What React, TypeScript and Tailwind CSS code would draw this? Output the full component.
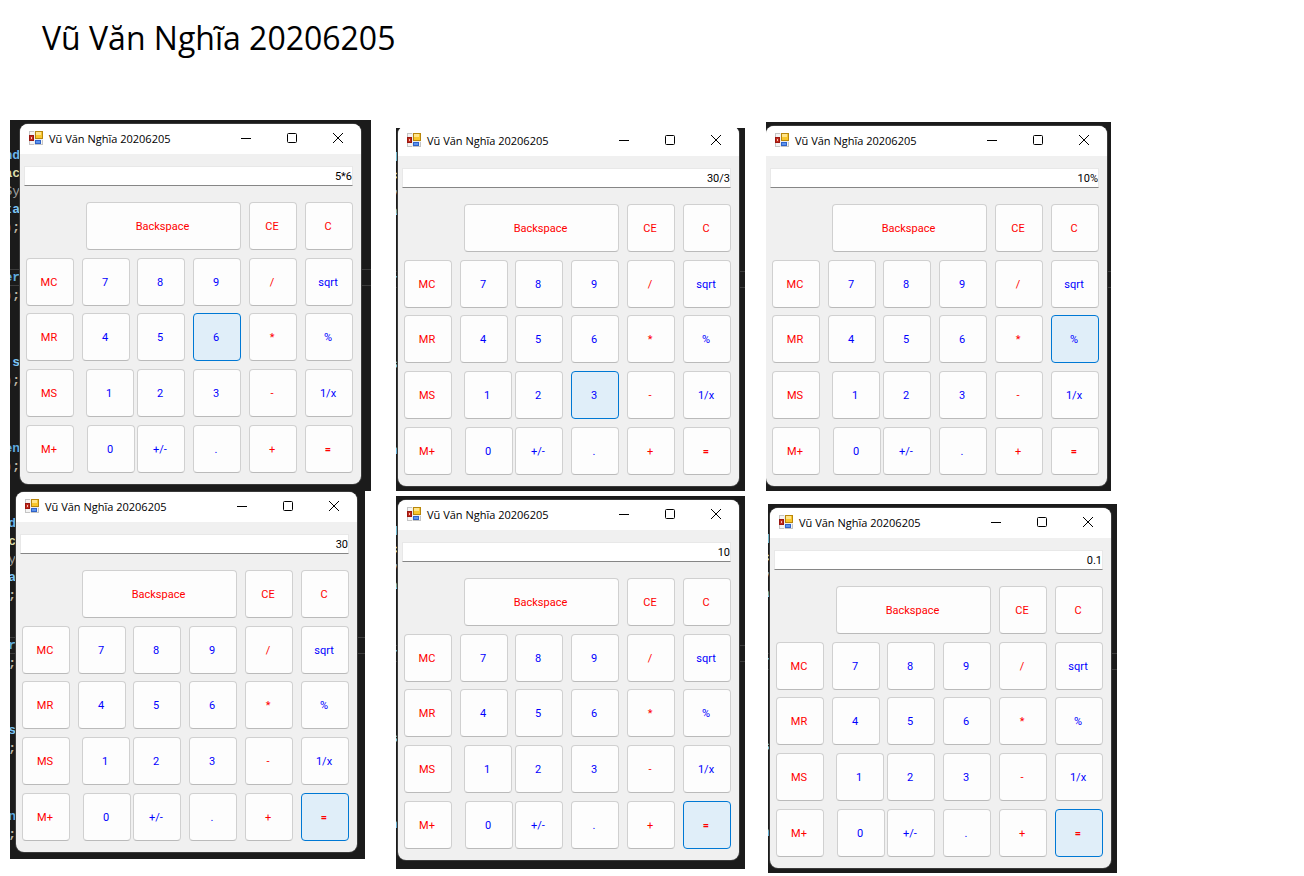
import React from "react";

type Key = { label: string; size?: string; space: string; blue?: boolean; bold?: boolean };
type Row = { space: string; keys: Key[] };

const rows: Row[] = [
  {
    space: "mt-4",
    keys: [
      { label: "Backspace", size: "w-[155px]", space: "ml-[60px]" },
      { label: "CE", space: "ml-2" },
      { label: "C", space: "ml-2" },
    ],
  },
  {
    space: "mt-2",
    keys: [
      { label: "MC", space: "" },
      { label: "7", space: "ml-2", blue: true },
      { label: "8", space: "ml-[7px]", blue: true },
      { label: "9", space: "ml-2", blue: true },
      { label: "/", space: "ml-2" },
      { label: "sqrt", space: "ml-2", blue: true },
    ],
  },
  {
    space: "mt-[7px]",
    keys: [
      { label: "MR", space: "" },
      { label: "4", space: "ml-2", blue: true },
      { label: "5", space: "ml-[7px]", blue: true },
      { label: "6", space: "ml-2", blue: true },
      { label: "*", space: "ml-2" },
      { label: "%", space: "ml-2", blue: true },
    ],
  },
  {
    space: "mt-2",
    keys: [
      { label: "MS", space: "" },
      { label: "1", space: "ml-3", blue: true },
      { label: "2", space: "ml-[3px]", blue: true },
      { label: "3", space: "ml-2", blue: true },
      { label: "-", space: "ml-2" },
      { label: "1/x", space: "ml-2", blue: true },
    ],
  },
  {
    space: "mt-2",
    keys: [
      { label: "M+", space: "" },
      { label: "0", space: "ml-[13px]", blue: true },
      { label: "+/-", space: "ml-0.5", blue: true },
      { label: ".", space: "ml-2", blue: true },
      { label: "+", space: "ml-2" },
      { label: "=", space: "ml-2", bold: true },
    ],
  },
];

function FormIcon() {
  return (
    <svg width="14" height="14" viewBox="0 0 14 14" aria-hidden="true">
      <rect width="14" height="14" fill="#c4c4c4" />
      <path d="M1 1h4v3H1zM1 10h4v3H1zM12 9h1v4h-1z" fill="#f4f4f4" />
      <rect x="5" y="0" width="1" height="14" fill="#eeeeee" />
      <rect x="0.500" y="4.500" width="4" height="5" fill="#c22a1c" stroke="#9a1710" />
      <rect x="2" y="6" width="1" height="2" fill="#f6c0b4" />
      <rect x="6.500" y="0.500" width="7" height="7" fill="#f8c62c" stroke="#b8860b" />
      <rect x="7" y="1" width="5" height="3" fill="#ffe48a" />
      <rect x="6" y="8" width="8" height="1" fill="#eeeeee" />
      <rect x="6.500" y="9.500" width="5" height="3" fill="#5b93ee" stroke="#2f62c8" />
    </svg>
  );
}

function TitleBar() {
  const control = "flex h-full w-[46px] items-center justify-center";
  return (
    <header className="flex h-[30px] items-center rounded-t-lg bg-white pb-0.5 pl-[9px]">
      <FormIcon />
      <h2 className="ml-1.5 flex-1 whitespace-nowrap pt-px font-['Open_Sans',sans-serif] text-[11px] leading-4">
        Vũ Văn Nghĩa 20206205
      </h2>
      <button className={control} aria-label="Minimize">
        <svg width="10" height="10" viewBox="0 0 10 10" stroke="#000">
          <path d="M0 5.500h10" />
        </svg>
      </button>
      <button className={control} aria-label="Maximize">
        <svg width="10" height="10" viewBox="0 0 10 10" fill="none" stroke="#000">
          <rect x="0.500" y="0.500" width="9" height="9" rx="1" />
        </svg>
      </button>
      <button className={control} aria-label="Close">
        <svg width="10" height="10" viewBox="0 0 10 10" stroke="#000">
          <path d="M0 0l10 10M10 0L0 10" />
        </svg>
      </button>
    </header>
  );
}

function EditorBackdrop() {
  return (
    <div aria-hidden="true">
      <div className="absolute -inset-x-5 top-[145px] h-[17px] border-y border-[#3c3c3c]" />
      <div className="absolute right-full top-[23px] flex w-5 flex-col items-end font-['Liberation_Mono',monospace] text-[13px] font-bold leading-[18px]">
        <span className="text-[#6cb4ea]">nd</span>
        <span className="text-[#dcdcaa]">ac</span>
        <span className="font-normal text-[#a0a0a0]">Sy</span>
        <span className="text-[#7cc4f4]">ta</span>
        <span className="text-[#c0b8a8]">);</span>
        <span className="mt-8 text-[#5fa8dc]">er</span>
        <span className="text-[#c0b8a8]">);</span>
        <span className="mt-[49px] text-[#7cc4f4]">s</span>
        <span className="text-[#c0b8a8]">);</span>
        <span className="mt-[50px] text-[#5fa8dc]">en</span>
        <span className="text-[#c0b8a8]">);</span>
      </div>
    </div>
  );
}

function Calculator({ value, active, frame, shift = "" }: { value: string; active: string; frame: string; shift?: string }) {
  return (
    <section className={`w-fit overflow-hidden bg-[#1b1b1b] ${frame}`}>
      <div className={`relative ${shift}`}>
        <EditorBackdrop />
        <div className="relative w-[341px] rounded-lg bg-[#f0f0f0] pb-[11px] ring-1 ring-[#3a3a3a]">
          <TitleBar />
          <div className="pl-1 pr-2 pt-3">
            <input
              aria-label="Result"
              defaultValue={value}
              className="block h-5 w-full border border-[#e8e8e8] border-b-[#868686] bg-white text-right font-[Roboto,sans-serif] text-[11px] leading-4 text-black outline-none"
            />
          </div>
          <div className="px-1.5">
            {rows.map((row, i) => (
              <div key={i} className={`flex ${row.space}`}>
                {row.keys.map((k) => (
                  <button
                    key={k.label}
                    className={`h-12 rounded border pr-0.5 pt-0.5 font-[Roboto,sans-serif] text-[11px] leading-4 ${k.size ?? "w-12"} ${k.space} ${
                      k.bold ? "font-bold" : ""
                    } ${k.blue ? "text-[#0000ff]" : "text-[#ff0000]"} ${
                      k.label === active
                        ? "border-[#0078d4] bg-[#e0eef9]"
                        : "border-[#d0d0d0] border-b-[#bababa] bg-[#fdfdfd]"
                    }`}
                  >
                    {k.label}
                  </button>
                ))}
              </div>
            ))}
          </div>
        </div>
      </div>
    </section>
  );
}

export default function App() {
  return (
    <main className="min-h-screen bg-white text-black">
      <h1 className="h-[120px] pl-[42px] pt-[18px] font-['Open_Sans',sans-serif] text-[32px] leading-10">Vũ Văn Nghĩa 20206205</h1>
      <div className="flex flex-wrap items-start pl-2.5">
        <div className="w-[386px]">
          <Calculator value="5*6" active="6" frame="px-2.5 pb-[7px] pt-1" />
          <Calculator value="30" active="=" frame="pb-[7px] pl-1.5 pr-2 pt-px" />
        </div>
        <div className="flex w-[370px] flex-col gap-[5px] pt-2">
          <Calculator value="30/3" active="3" frame="pb-[5px] pl-0.5 pr-1.5" shift="-mt-0.5" />
          <Calculator value="10" active="=" frame="pb-[9px] pl-0.5 pr-1.5 pt-1" />
        </div>
        <div className="flex flex-col gap-[13px] pt-0.5">
          <Calculator value="10%" active="%" frame="pb-[5px] pr-1 pt-1" />
          <div className="pl-0.5">
            <Calculator value="0.1" active="=" frame="pb-[5px] pl-0.5 pr-1.5 pt-1" />
          </div>
        </div>
      </div>
    </main>
  );
}
